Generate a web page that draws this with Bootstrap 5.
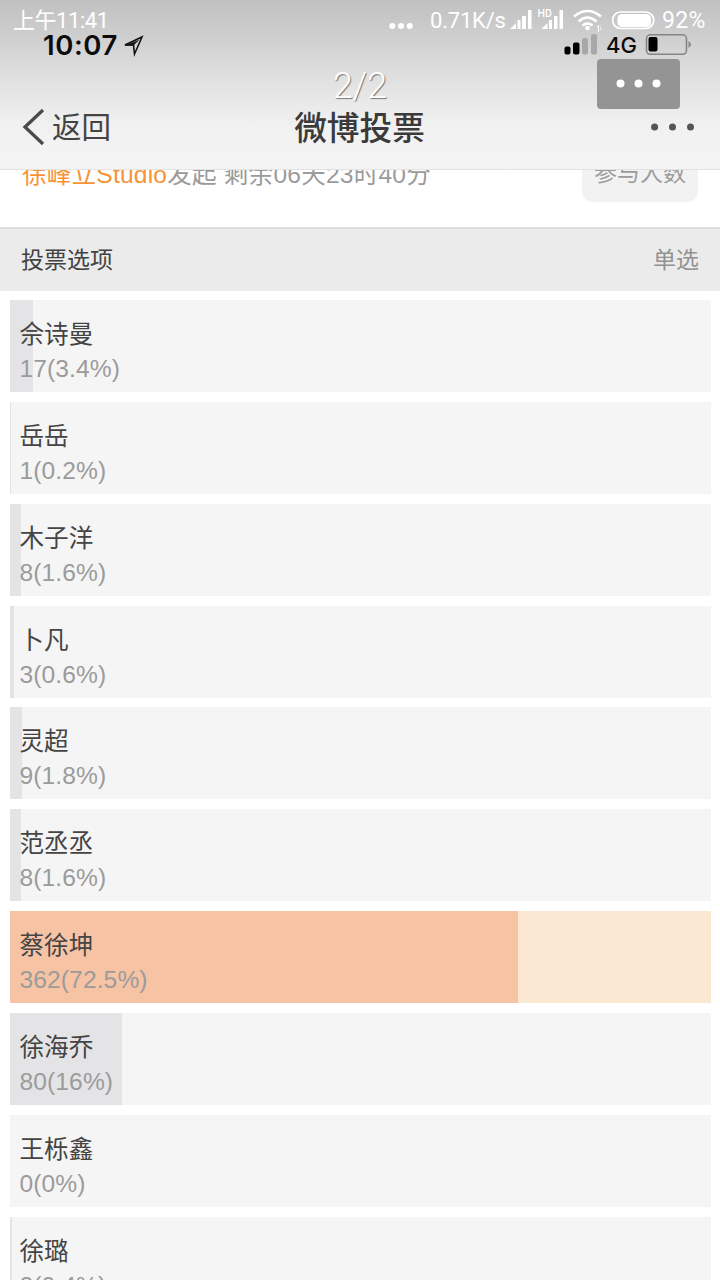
<!DOCTYPE html>
<html lang="zh-CN">
<head>
<meta charset="utf-8">
<meta name="viewport" content="width=device-width, initial-scale=1">
<title>微博投票</title>
<link href="https://cdn.jsdelivr.net/npm/bootstrap@5.3.0/dist/css/bootstrap.min.css" rel="stylesheet">
<style>
body{font-family:"Liberation Sans","Noto Sans CJK SC",sans-serif;background:#fff;color:#424242}
.screen{width:720px;height:1280px}
.top{height:170px;background:linear-gradient(#c0c0c0 0,#d0d0d0 40px,#e1e1e1 80px,#f1f1f1 125px,#f4f4f4 169px);border-bottom:1px solid #e2e2e2}
.system{height:34px;color:#fff;font:22px/26px Roboto,"Noto Sans CJK SC",sans-serif;padding:8px 13px 0 13px}
.system .clock{font-weight:400;letter-spacing:-.45px}
.system .speed{width:75px;margin-left:15px;letter-spacing:-.2px}
.system .level{width:45px;font-size:23px;letter-spacing:.3px}
.phone{height:24px;color:#0c0c0c;padding-left:43px;padding-right:27px}
.phone .clock{font:600 27.500px/22px Inter,sans-serif;letter-spacing:.6px}
.phone .carrier{font:500 22px/22px Inter,sans-serif}
.pager{height:51px}
.pager .count{font:300 36px/51px Roboto,sans-serif;color:#fff;text-shadow:1px 1px 1px #777;padding-top:3px}
.third{flex:1 1 0}
.overflow-btn{width:83px;height:50px;margin:1px 40px 0 0;background:#949494;border-radius:4px;border:0;padding:0}
.titlebar{height:37px;padding:0 25px 0 22px}
.back{font-size:29.500px;line-height:41px;color:#444;gap:7px}
.heading{font:500 32.700px/37px "Noto Sans CJK SC",sans-serif;color:#3a3a3a;padding-left:2px;margin-top:-4px}
.info{height:57px;overflow:hidden;padding:0 22px;background:#fff}
.info .byline{font-size:24.6px;line-height:30px;margin-top:-10px;color:#9b9b9b;white-space:pre;letter-spacing:.19px}
.info .author{color:#f79237}
.people{width:116px;height:62px;margin-top:-30px;background:#f2f2f2;border-radius:10px;color:#9b9b9b;font-size:23px;line-height:30px;padding-top:18px}
.section{height:64px;background:#ebebeb;border-top:2px solid #dedede;padding:0 21px;font-size:23px}
.section .kind{color:#929292}
.options{padding:9px 9px 0 9.5px;gap:9.86px}
.option{height:92px;flex:none;background:#f5f5f5;padding:18px 10px 0}
.option .fill{position:absolute;left:0;top:0;bottom:0;background:#e4e4e6}
.option.chosen{background:#fbe8d3}
.option.chosen .fill{background:#f6c3a4}
.option .name{font-size:24.6px;line-height:34px;color:#444}
.option .votes{font-size:24.6px;line-height:34px;color:#9b9b9b;letter-spacing:.1px}
</style>
</head>
<body>
<div class="screen overflow-hidden d-flex flex-column mx-auto">
<header class="top flex-shrink-0">
  <div class="system d-flex justify-content-between">
    <span class="clock">上午11:41</span>
    <div class="d-flex">
      <svg width="26" height="26" viewBox="389 8 26 26" fill="#fff"><circle cx="392.300" cy="26" r="3"/><circle cx="401" cy="26" r="3"/><circle cx="409.700" cy="26" r="3"/></svg>
      <span class="speed text-nowrap">0.71K/s</span>
      <svg class="status-icons" width="157" height="26" viewBox="505 8 157 26" fill="#fff" overflow="visible">
        <path d="M510 29l6-6v6zM517.500 20h3v9h-3zM522 16h4v13h-4zM528 10h3.500v19H528z"/>
        <path d="M541.500 29l6-6v6zM549 20h3v9h-3zM554 16h3.500v13H554zM559.500 10h3.500v19h-3.500z"/>
        <text x="537.500" y="16.500" font-size="10.500" font-weight="500">HD</text>
        <g fill="none" stroke="#fff" stroke-width="2.600"><path d="M574 16.500q13.500-11 27 0M578.500 21.500q9-8 18 0M582.500 25.500q5-4 10 0"/></g>
        <circle cx="587.500" cy="28" r="2.300"/><path d="M598 32v-5h-1.500l2.500-2v7zM600.500 25v5.500l1-1z"/>
        <rect x="612.700" y="12" width="41" height="16.500" rx="8" fill="none" stroke="#fff" stroke-width="1.700"/>
        <rect x="617.500" y="14" width="33.500" height="13" rx="4.500"/>
      </svg>
      <span class="level text-nowrap">92%</span>
    </div>
  </div>
  <div class="phone d-flex justify-content-between">
    <div class="d-flex"><span class="clock">10:07</span>
      <svg class="ms-1" width="22" height="24" viewBox="122 34 22 24" fill="none" stroke="#111" stroke-width="1.600"><path d="M125 45l17-8-7.500 17-1-9z"/><path d="M125 45.300l8.500-.3 5-4.500-8 3z" fill="#111" stroke-width=".6"/></svg>
    </div>
    <div class="d-flex">
      <svg width="43" height="24" viewBox="563 34 43 24"><rect x="564.500" y="46.500" width="6" height="8" rx="2"/><rect x="573" y="42.500" width="6.500" height="12" rx="2"/><g fill="#a8a8a8"><rect x="582" y="38" width="6" height="16.500" rx="2"/><rect x="591" y="34" width="6" height="20.500" rx="2"/></g></svg>
      <span class="carrier">4G</span>
      <svg class="ms-2" width="48" height="24" viewBox="646 34 48 24"><rect x="647.500" y="34.800" width="40" height="19.500" rx="4" fill="none" stroke="#858585" stroke-width="1.600"/><rect x="649.500" y="37" width="9" height="14.500" rx="2"/><path d="M689.500 41q5 3.500 0 7z" fill="#858585"/></svg>
    </div>
  </div>
  <div class="pager d-flex">
    <div class="third"></div><span class="count">2/2</span>
    <div class="third d-flex justify-content-end"><button class="overflow-btn d-flex" aria-label="更多"><svg width="83" height="50" fill="#fff"><circle cx="23.500" cy="24.500" r="4"/><circle cx="41.500" cy="24.500" r="4"/><circle cx="59.500" cy="24.500" r="4"/></svg></button></div>
  </div>
  <div class="titlebar d-flex align-items-center">
    <div class="third back d-flex"><svg width="23" height="39" fill="none" stroke="#4b4b4b" stroke-width="3.300"><path d="M21 3L3 20l18 17"/></svg><span>返回</span></div>
    <span class="heading">微博投票</span>
    <div class="third d-flex justify-content-end"><svg width="44" height="37" fill="#555"><circle cx="3.600" cy="18" r="3.500"/><circle cx="21.500" cy="18" r="3.500"/><circle cx="39.500" cy="18" r="3.500"/></svg></div>
  </div>
</header>
<section class="info flex-shrink-0 d-flex justify-content-between">
  <div class="byline"><span class="author">徐峰立Studio</span>发起 剩余06天23时40分</div>
  <div class="people text-center">参与人数</div>
</section>
<div class="section flex-shrink-0 d-flex justify-content-between align-items-center"><span>投票选项</span><span class="kind">单选</span></div>
<main class="options d-flex flex-column">
  <div class="option position-relative"><div class="fill" style="width:3.4%"></div><div class="name position-relative">佘诗曼</div><div class="votes position-relative">17(3.4%)</div></div>
  <div class="option position-relative"><div class="fill" style="width:.2%"></div><div class="name position-relative">岳岳</div><div class="votes position-relative">1(0.2%)</div></div>
  <div class="option position-relative"><div class="fill" style="width:1.6%"></div><div class="name position-relative">木子洋</div><div class="votes position-relative">8(1.6%)</div></div>
  <div class="option position-relative"><div class="fill" style="width:.6%"></div><div class="name position-relative">卜凡</div><div class="votes position-relative">3(0.6%)</div></div>
  <div class="option position-relative"><div class="fill" style="width:1.8%"></div><div class="name position-relative">灵超</div><div class="votes position-relative">9(1.8%)</div></div>
  <div class="option position-relative"><div class="fill" style="width:1.6%"></div><div class="name position-relative">范丞丞</div><div class="votes position-relative">8(1.6%)</div></div>
  <div class="option chosen position-relative"><div class="fill" style="width:72.5%"></div><div class="name position-relative">蔡徐坤</div><div class="votes position-relative">362(72.5%)</div></div>
  <div class="option position-relative"><div class="fill" style="width:16%"></div><div class="name position-relative">徐海乔</div><div class="votes position-relative">80(16%)</div></div>
  <div class="option position-relative"><div class="fill" style="width:0%"></div><div class="name position-relative">王栎鑫</div><div class="votes position-relative">0(0%)</div></div>
  <div class="option position-relative"><div class="fill" style="width:.4%"></div><div class="name position-relative">徐璐</div><div class="votes position-relative">2(0.4%)</div></div>
</main>
</div>
<script src="https://cdn.jsdelivr.net/npm/bootstrap@5.3.0/dist/js/bootstrap.bundle.min.js"></script>
</body>
</html>
